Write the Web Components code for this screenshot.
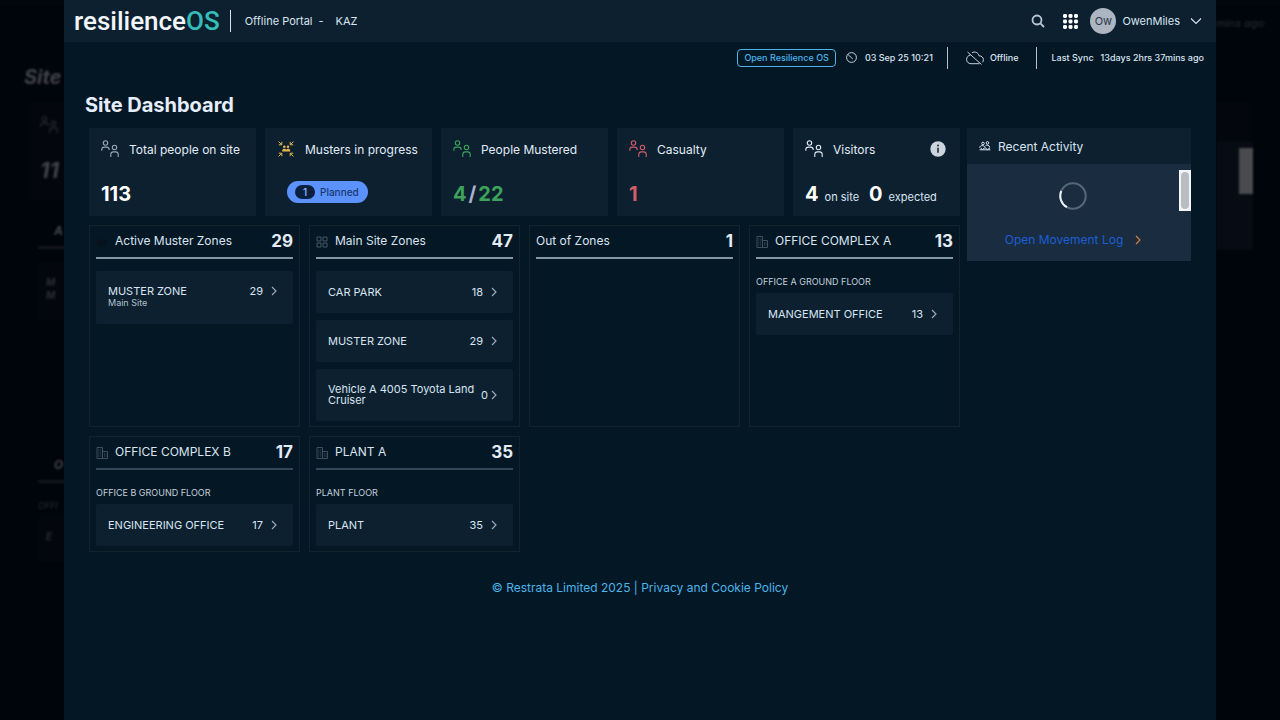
<!DOCTYPE html>
<html lang="en">
<head>
<meta charset="utf-8">
<title>resilienceOS – Site Dashboard</title>
<style>
  body { margin: 0; background: #00040b; color: #d9e4f1; font-family: Inter, "Liberation Sans", sans-serif; font-size: 11px; }
</style>
</head>
<body>
<app-shell>
  <side-echo slot="left" side="left"></side-echo>
  <app-header></app-header>
  <status-bar></status-bar>
  <site-dashboard>
    <stat-card slot="stats" icon="people" tone="muted" label="Total people on site"><stat-value>113</stat-value></stat-card>
    <stat-card slot="stats" icon="muster" tone="amber" label="Musters in progress"><plan-pill count="1">Planned</plan-pill></stat-card>
    <stat-card slot="stats" icon="people" tone="green" label="People Mustered"><stat-value tone="green">4</stat-value><stat-value tone="slash">/</stat-value><stat-value tone="green">22</stat-value></stat-card>
    <stat-card slot="stats" icon="people" tone="red" label="Casualty"><stat-value tone="red">1</stat-value></stat-card>
    <stat-card slot="stats" icon="people" tone="light" label="Visitors" info><stat-value unit="on site">4</stat-value><stat-value unit="expected">0</stat-value></stat-card>

    <zone-panel slot="zones" icon="blank" name="Active Muster Zones" total="29">
      <zone-row count="29" note="Main Site">MUSTER ZONE</zone-row>
    </zone-panel>
    <zone-panel slot="zones" icon="tiles" name="Main Site Zones" total="47">
      <zone-row count="18">CAR PARK</zone-row>
      <zone-row count="29">MUSTER ZONE</zone-row>
      <zone-row count="0" tight>Vehicle A 4005 Toyota Land Cruiser</zone-row>
    </zone-panel>
    <zone-panel slot="zones" name="Out of Zones" total="1"></zone-panel>
    <zone-panel slot="zones" icon="building" name="OFFICE COMPLEX A" total="13" floor="OFFICE A GROUND FLOOR">
      <zone-row count="13">MANGEMENT OFFICE</zone-row>
    </zone-panel>
    <zone-panel slot="zones" icon="building" name="OFFICE COMPLEX B" total="17" floor="OFFICE B GROUND FLOOR" dim>
      <zone-row count="17">ENGINEERING OFFICE</zone-row>
    </zone-panel>
    <zone-panel slot="zones" icon="building" name="PLANT A" total="35" floor="PLANT FLOOR" dim>
      <zone-row count="35">PLANT</zone-row>
    </zone-panel>

    <recent-activity slot="aside"></recent-activity>
  </site-dashboard>
  <side-echo slot="right" side="right"></side-echo>
</app-shell>

<script>
const svg = (w, h, box, body, extra = '') =>
  `<svg width="${w}" height="${h}" viewBox="${box}" fill="none" stroke="currentColor" aria-hidden="true" ${extra}>${body}</svg>`;

const ICONS = {
  people: svg(18, 18, '0 0 18 18', '<circle cx="4.500" cy="3" r="2.200"/><path d="M.800 10.800V9.500a2.500 2.500 0 0 1 2.500-2.400h2.400a2.500 2.500 0 0 1 2.500 2.400v.5"/><circle cx="13.500" cy="7.500" r="2.200"/><path d="M9.800 17v-2.700a2.500 2.500 0 0 1 2.500-2.400h2.400a2.500 2.500 0 0 1 2.500 2.400V17"/>', 'stroke-width="1.1"'),
  muster: svg(18, 18, '0 0 18 18', '<path d="M1.500 1.500l3 3M4.800 1.800v3H1.800M16.500 1.500l-3 3M13.200 1.800v3h3M1.500 16.500l3-3M1.800 13.200h3v3M16.500 16.500l-3-3M16.200 13.200h-3v3"/><g fill="currentColor" stroke="none"><circle cx="7.300" cy="6.800" r="1.300"/><circle cx="11" cy="6.800" r="1.300"/><path d="M5.200 11.600v-1c0-2.400 3.700-2.400 4-.6.300-1.800 4-1.800 4 .6v1z"/></g>', 'stroke-width="1"'),
  tiles: svg(12, 12, '0 0 12 12', '<path d="M1 1h4v4H1zM7 1h4v4H7zM1 7h4v4H1zM7 7h4v4H7z"/>', 'stroke-width="1"'),
  building: svg(12, 12, '0 0 12 12', '<path d="M1 11.500v-11h5.500v11zM6.500 4.500h5v7h-5"/><path d="M2.800 2.500v7M4.700 2.500v7M8.500 6.500v3.500M10 6.500v3.500" stroke-dasharray="1 1"/>', 'stroke-width="0.9"'),
  blank: '<svg width="12" height="12" viewBox="0 0 12 12" aria-hidden="true"><path d="M1 3l5 1 5-1v7l-5-1-5 1z" fill="#06131d"/></svg>',
  chevron: svg(6, 10, '0 0 6 10', '<path d="M1 1l4 4-4 4"/>', 'stroke-width="1.1"'),
  crowd: svg(12, 10, '0 0 12 10', '<circle cx="4" cy="2.500" r="1.300"/><circle cx="8.500" cy="1.900" r="1.300"/><path d="M.600 6.600c.4-2.600 4.600-2.600 5.200-.4M6.400 4.800c1.300-1.400 4.200-.6 4.300 1.600M.600 8.800h10.800M1.500 7l2 1.500L6 6.600l2.300 1.900L11 7"/>', 'stroke-width="1"'),
};

const define = (name, css, html) => customElements.define(name, class extends HTMLElement {
  constructor() { super(); this.attachShadow({ mode: 'open' }); }
  connectedCallback() {
    const get = key => this.getAttribute(key) || '';
    this.shadowRoot.innerHTML = `<style>*{box-sizing:border-box}svg{display:block;flex:none}button{font:inherit;color:inherit;background:none;border:0;padding:0;cursor:pointer}${css}</style>` +
      (typeof html === 'function' ? html(get, this) : html);
  }
});

define('app-shell', `
  :host { display: grid; grid-template-columns: 5% minmax(0, 1fr) 5%; min-height: 100vh; }
  .page { background: #041724; display: flex; flex-direction: column; }
  footer { text-align: center; padding: 26px 0; font-size: 12px; line-height: 20px; color: #4bb4ea; }
  a { color: inherit; text-decoration: none; }
`, `<slot name="left"></slot>
  <div class="page"><slot></slot><footer>© Restrata Limited 2025 | <a href="#policy">Privacy and Cookie Policy</a></footer></div>
  <slot name="right"></slot>`);

/* Faint, blurred continuation of the dashboard that shows in the margins. */
define('side-echo', `
  :host { display: block; overflow: hidden; min-width: 0; }
  .wrap { filter: blur(1px); color: #414347; font-style: italic; font-weight: 700; white-space: nowrap; }
  .bar { height: 6px; background: #02070e; }
  .title { padding: 57px 0 11px 24px; font-size: 20px; line-height: 28px; }
  .card { margin-left: 28px; width: 100px; height: 98px; padding: 14px 12px; background: #03070d; }
  .num { font-size: 22px; line-height: 24px; margin-top: 24px; }
  .box { margin: 10px 0 0 28px; width: 100px; height: 224px; padding: 8px; border: 2px solid #020708; }
  .box.low { height: 130px; }
  .cap { font-size: 12px; line-height: 22px; padding-left: 16px; }
  .line { height: 3px; margin: 4px 0 13px; background: #14181e; }
  .item { height: 58px; padding: 14px 8px; background: #03070d; font-size: 10px; line-height: 13px; color: #2a2d31; }
  .low .item { height: 46px; }
  .floor { font-size: 9px; line-height: 20px; color: #2a2d31; font-weight: 400; }
  .sync { padding: 9px 0 59px; font-size: 11px; line-height: 16px; font-weight: 500; color: #25282c; }
  .sync + .feed { margin-top: 12px; }
  .feed { width: 37px; height: 148px; background: #070b13; border-top: 40px solid #03070d; }
  .thumb { width: 14px; height: 46px; margin: 6px 0 0 auto; background: #4a4b4f; }
  .ppl { color: #2c2e32; }
`, get => get('side') === 'left' ? `<div class="wrap" aria-hidden="true"><div class="bar"></div>
    <div class="title">Site</div>
    <div class="card"><div class="ppl">${ICONS.people}</div><div class="num">11</div></div>
    <div class="box"><div class="cap">A</div><div class="line"></div><div class="item">M<br>M</div></div>
    <div class="box low"><div class="cap">O</div><div class="line"></div><div class="floor">OFFI</div><div class="item">E</div></div></div>`
  : `<div class="wrap" aria-hidden="true"><div class="bar"></div><div class="sync">mins ago</div><div class="feed"><div class="thumb"></div></div></div>`);

define('app-header', `
  :host { display: flex; align-items: center; justify-content: space-between; height: 42px; padding: 0 14px 0 10px; background: #0c2030; }
  .group { display: flex; align-items: center; }
  .logo { font: 500 26px/30px Roboto, sans-serif; color: #f2f6fb; text-decoration: none; }
  .logo span { color: #35bdb9; }
  .rule { width: 1px; height: 22px; background: #d9e4f1; margin: 0 14px 0 10px; }
  .portal { display: flex; gap: 12px; font-size: 11px; }
  .portal span:first-child { margin-right: -6px; }
  .tools { gap: 18px; }
  .user { display: flex; align-items: center; gap: 6px; font-size: 11px; }
  .avatar { display: grid; place-items: center; width: 26px; height: 26px; border-radius: 50%; background: #adb5c2; color: #2c3847; }
  .user svg { margin-left: 4px; }
  .tools .user { margin-left: -6px; }
`, `<div class="group"><a class="logo" href="#home">resilience<span>OS</span></a><div class="rule"></div>
    <div class="portal"><span>Offline Portal</span><span>-</span><span>KAZ</span></div></div>
  <div class="group tools">
    <button aria-label="Search">${svg(14, 14, '0 0 14 14', '<circle cx="6" cy="6" r="4.500"/><path d="M9.400 9.400L13 13"/>', 'stroke-width="1.8" style="color:#bcc8d6"')}</button>
    <button aria-label="Apps"><svg width="15" height="15" viewBox="0 0 15 15" fill="#fff" aria-hidden="true">${[0, 5.500, 11].map(y => [0, 5.500, 11].map(x => `<rect x="${x}" y="${y}" width="4" height="4" rx="1.400"/>`).join('')).join('')}</svg></button>
    <button class="user"><span class="avatar">Ow</span><span>OwenMiles</span>${svg(12, 8, '0 0 12 8', '<path d="M1 1.500l5 5 5-5"/>', 'stroke-width="1.1"')}</button>
  </div>`);

define('status-bar', `
  :host { display: flex; align-items: center; justify-content: flex-end; height: 31px; padding-right: 12px; font-size: 9px; font-weight: 500; }
  .open { height: 18px; padding: 0 6px; border: 1px solid #4bb4ea; border-radius: 4px; color: #4bb4ea; }
  .item { display: flex; align-items: center; gap: 8px; padding: 0 14px 0 10px; }
  .item.net { gap: 6px; padding: 0 18px; }
  .item.sync { gap: 7px; padding: 0 0 0 14px; }
  .rule { width: 1px; height: 22px; background: #b4c1cd; }
`, `<button class="open">Open Resilience OS</button>
  <div class="item">${svg(11, 11, '0 0 11 11', '<circle cx="5.500" cy="5.500" r="4.900"/><path d="M2.200 2.800l4.500 4"/>', 'stroke-width="0.9"')}<time>03 Sep 25 10:21</time></div>
  <div class="rule"></div>
  <div class="item net">${svg(18, 14, '0 0 18 14', '<path d="M1.500 1l14 12.500M4.500 4C2 4.500.600 6.300.600 8.500c0 2.500 1.900 4.200 4.400 4.200h8.500M6 1.800c2.800-1.700 6.300-.4 7 3 2.600 0 4.400 1.700 4.400 4 0 1-.4 2-1 2.600"/>', 'stroke-width="0.9"')}<span>Offline</span></div>
  <div class="rule"></div>
  <div class="item sync"><span>Last Sync</span><span>13days 2hrs 37mins ago</span></div>`);

define('site-dashboard', `
  :host { display: block; padding: 0 25px; }
  h1 { margin: 18px 0 9px -4px; font-size: 20px; line-height: 28px; font-weight: 700; color: #e6eefb; }
  .cols { display: grid; grid-template-columns: minmax(0, 1fr) 224px; gap: 7px; align-items: start; }
  .main, .stats, .zones { display: grid; gap: 9px; }
  .stats { grid-template-columns: repeat(5, minmax(0, 1fr)); }
  .zones { grid-template-columns: repeat(4, minmax(0, 1fr)); }
`, `<h1>Site Dashboard</h1><div class="cols"><div class="main">
    <div class="stats"><slot name="stats"></slot></div><div class="zones"><slot name="zones"></slot></div></div>
    <slot name="aside"></slot></div>`);

define('stat-card', `
  :host { display: block; padding: 11px 14px 10px 12px; background: #0c2030; }
  .head { display: flex; align-items: center; gap: 10px; height: 20px; }
  h2 { margin: 0; font-size: 12px; font-weight: 400; white-space: nowrap; color: #e3ecf6; }
  .body { display: flex; align-items: center; height: 24px; margin-top: 23px; gap: 2px; }
  :host([info]) .body { gap: 10px; }
  :host([icon=muster]) .body { margin-top: 21px; padding-bottom: 2px; height: 26px; }
  .muted { color: #9aa8b6; } .amber { color: #e4b54a; } .green { color: #3da35a; } .red { color: #d25c68; } .light { color: #e3ecf6; }
  button { margin-left: auto; }
`, (get, el) => `<div class="head"><span class="${get('tone')}">${ICONS[get('icon')]}</span><h2>${get('label')}</h2>${el.hasAttribute('info') ? `<button aria-label="Visitor details"><svg width="16" height="16" viewBox="0 0 16 16" aria-hidden="true"><circle cx="8" cy="8" r="7.700" fill="#ccd5dd"/><circle cx="8" cy="4.600" r="1" fill="#1c2b38"/><path d="M7.200 6.700h1.600v5H7.200z" fill="#1c2b38"/></svg></button>` : ''}</div>
  <div class="body"><slot></slot></div>`);

define('stat-value', `
  :host { display: flex; align-items: baseline; gap: 6px; color: #fff; }
  b { font-size: 20px; line-height: 24px; font-weight: 700; }
  :host([tone=green]) { color: #3da35a; } :host([tone=red]) { color: #d25c68; } :host([tone=slash]) { color: #aab4cc; }
  small { font-size: 11px; color: #d9e4f1; }
`, get => `<b><slot></slot></b>${get('unit') ? `<small>${get('unit')}</small>` : ''}`);

define('plan-pill', `
  :host { display: block; margin-left: 10px; }
  button { display: flex; align-items: center; gap: 5px; height: 22px; padding: 0 9px 0 8px; border-radius: 11px; background: #5b92fd; color: #17396f; font-size: 10px; font-weight: 500; }
  span { width: 20px; line-height: 14px; border-radius: 7px; background: #0a2040; color: #9dbcff; }
`, get => `<button><span>${get('count')}</span><slot></slot></button>`);

define('zone-panel', `
  :host { display: block; padding: 0 6px 5px; border: 1px solid #13232c; --line: #8497a5; }
  :host([dim]) { --line: #33475a; }
  header { display: flex; align-items: center; height: 33px; gap: 7px; padding-bottom: 2px; border-bottom: 2px solid var(--line); margin-bottom: 12px; }
  header svg { color: #465663; margin-top: 2px; }
  h2 { margin: 0 auto 0 0; font-size: 12px; font-weight: 400; white-space: nowrap; }
  b { font-size: 17px; font-weight: 700; color: #e3ecf6; }
  h3 { margin: 0; font-size: 9px; line-height: 22px; font-weight: 400; color: #c3d0dd; }
  .rows { display: grid; gap: 7px; }
`, get => `<header>${ICONS[get('icon')] || ''}<h2>${get('name')}</h2><b>${get('total')}</b></header>
  ${get('floor') ? `<h3>${get('floor')}</h3>` : ''}<div class="rows"><slot></slot></div>`);

define('zone-row', `
  :host { display: block; }
  button { display: flex; align-items: center; width: 100%; min-height: 42px; padding: 15px 16px 15px 12px; background: #0c2030; text-align: left; line-height: 11px; border-radius: 2px; }
  :host([note]) button { align-items: flex-start; }
  .name { flex: 1; }
  small { display: block; font-size: 9px; line-height: 12px; color: #b3c1ce; }
  .count { margin-right: 8px; }
  :host([tight]) .count { margin-right: 3px; }
  svg { color: #9fafbd; }
`, get => `<button><span class="name"><slot></slot>${get('note') ? `<small>${get('note')}</small>` : ''}</span><span class="count">${get('count')}</span>${ICONS.chevron}</button>`);

define('recent-activity', `
  :host { display: block; background: #1a2c40; }
  h2 { display: flex; align-items: center; gap: 7px; margin: 0; height: 36px; padding: 0 12px; background: #0c2030; font-size: 12px; font-weight: 400; }
  .feed { display: grid; grid-template-columns: 1fr 12px; justify-items: center; align-items: center; padding-top: 6px; }
  .spin { width: 28px; height: 28px; margin-top: 10px; }
  .track { width: 12px; height: 41px; padding: 2px; background: #f3f5f8; }
  .thumb { height: 37px; border-radius: 4px; background: #b9bcc1; }
  a { display: flex; justify-content: center; align-items: center; gap: 12px; padding: 18px 12px 11px 0; line-height: 21px; font-size: 12px; color: #1b5fd6; text-decoration: none; }
  a svg { color: #e0803a; }
`, `<h2>${ICONS.crowd}Recent Activity</h2>
  <div class="feed"><svg class="spin" viewBox="0 0 28 28" fill="none" stroke-width="2" role="img" aria-label="Loading"><circle cx="14" cy="14" r="12.700" stroke="#56677a"/><path d="M2.300 9a12.700 12.700 0 0 0 5.700 16.200" stroke="#eef3f8"/></svg>
  <div class="track"><div class="thumb"></div></div></div>
  <a href="#log">Open Movement Log${ICONS.chevron}</a>`);
</script>
</body>
</html>
